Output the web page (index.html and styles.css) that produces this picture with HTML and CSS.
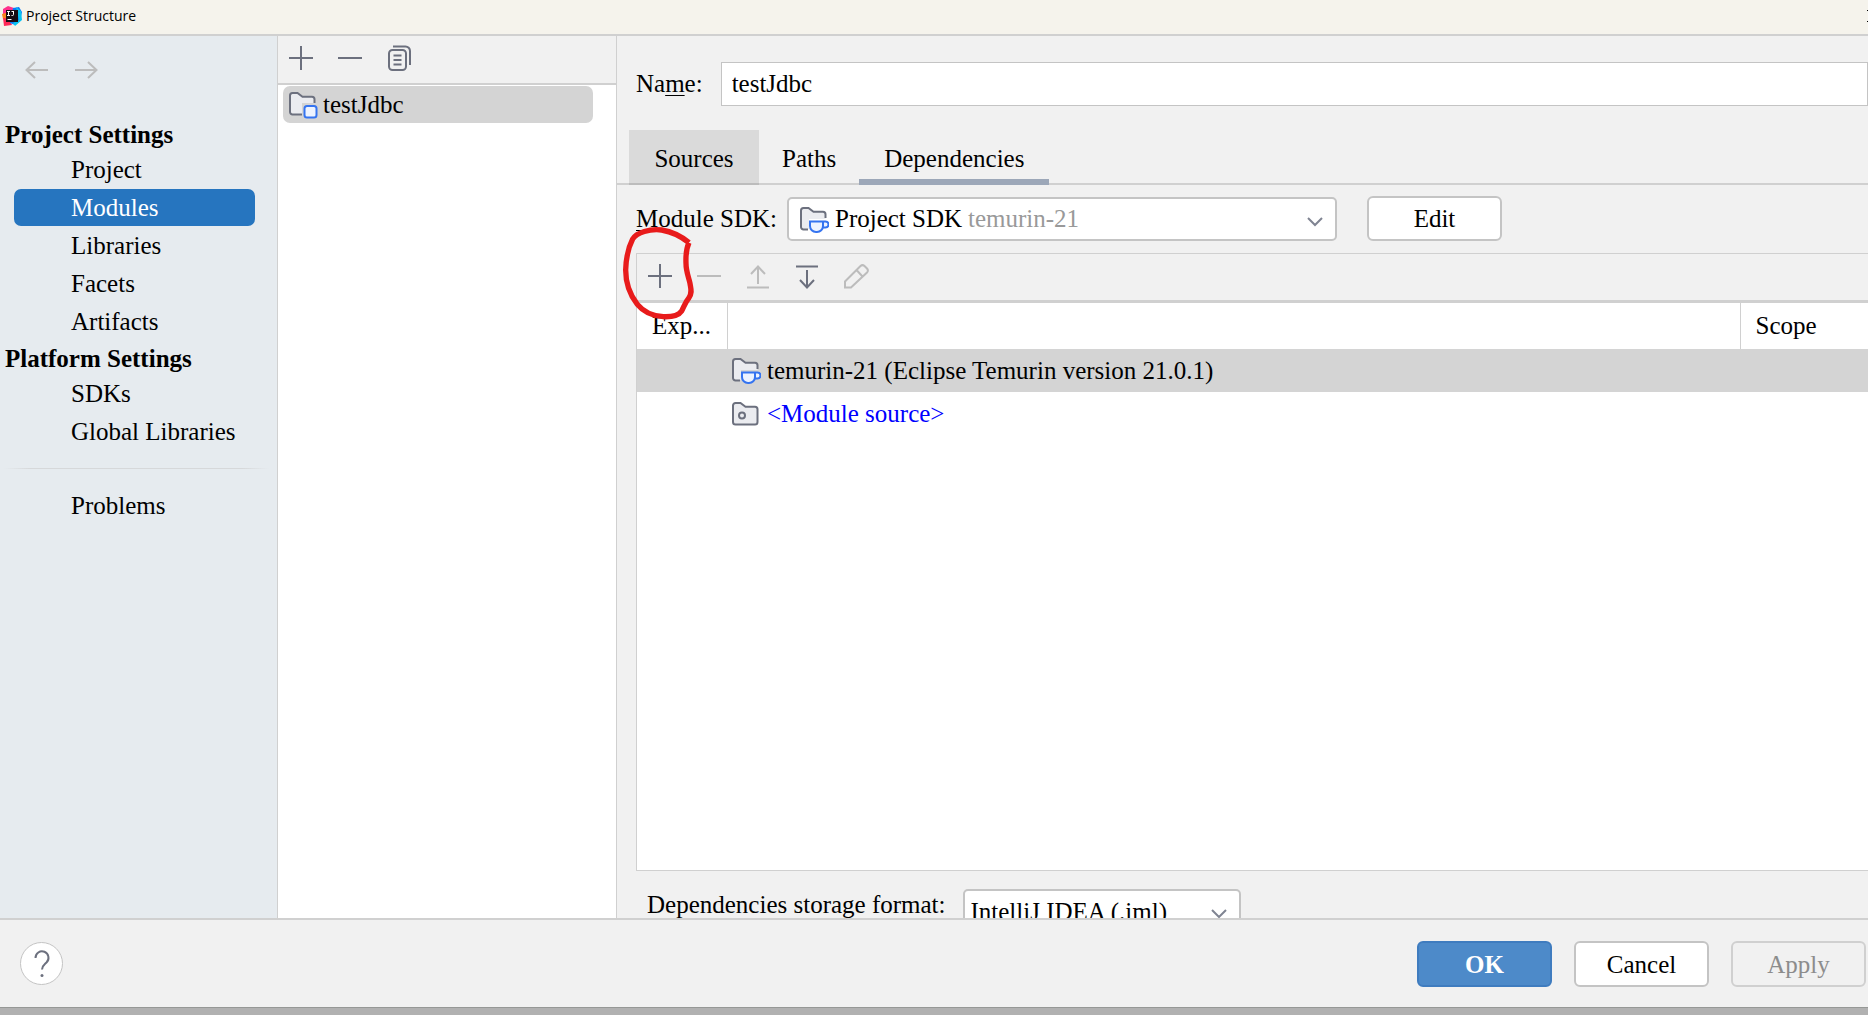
FILE: index.html
```html
<!DOCTYPE html>
<html lang="en">
<head>
<meta charset="utf-8">
<title>Project Structure</title>
<link rel="stylesheet" href="styles.css">
</head>
<body>
<svg class="defs" aria-hidden="true">
  <symbol id="add" viewBox="0 0 28 28"><path d="M14 2v24M2 14h24"/></symbol>
  <symbol id="remove" viewBox="0 0 28 28"><path d="M2 14h24"/></symbol>
  <symbol id="chevron" viewBox="0 0 16 10"><path d="M1 1l7 7 7-7"/></symbol>
  <symbol id="sdk" viewBox="0 0 30 28">
    <path class="folder-fill" d="M2 4.500a2.500 2.500 0 0 1 2.500-2.500h5l5 3.700h9.500a2.500 2.500 0 0 1 2.500 2.500V13H10v10H4.500A2.500 2.500 0 0 1 2 20.500z"/>
    <path d="M9 23.500H4.500A2.500 2.500 0 0 1 2 21V4.500A2.500 2.500 0 0 1 4.500 2h5l5 3.700H24a2.500 2.500 0 0 1 2.500 2.500V12"/>
    <path class="badge" d="M11 15.500h13v4.500a6 6 0 0 1-6 6h-1a6 6 0 0 1-6-6zM24 15.500h2.500a2.500 2.500 0 0 1 0 6H24"/>
  </symbol>
</svg>
<div class="window">
  <header class="titlebar">
    <svg class="logo" viewBox="0 0 20 20" aria-hidden="true">
      <path fill="#ff318c" d="M1 3l5-3 6 2-4 8-7 1z"/>
      <path fill="#fc801d" d="M0 8l7-2v9l-6-2z"/>
      <path fill="#fe2857" d="M1 12l6 1 3 6-8 1z"/>
      <path fill="#087cfa" d="M11 2l6-1 3 5-2 9-5 4-5-2z"/>
      <path fill="#07c3f2" d="M14 1l5 4 1 9-7 6-2-3 6-3z"/>
      <path fill="#160b14" d="M4 4h12v12H4z"/>
      <path class="logo-mark" d="M5 5.500h3M6.500 5.500v4M5 9.500h3M9.500 5.500H12M11.500 5.500v3q0 1-1 1h-1M5.500 13.500h4"/>
    </svg>
    <h1 class="title">Project Structure</h1>
    <button class="close" aria-label="Close"><svg viewBox="0 0 12 12"><path d="M0 0l12 12M12 0L0 12"/></svg></button>
  </header>

  <div class="content">
    <aside class="sidebar">
      <div class="history">
        <button class="tool off" aria-label="Back"><svg viewBox="0 0 28 28"><path d="M25 14H4M12 6l-8.500 8 8.500 8"/></svg></button>
        <button class="tool off" aria-label="Forward"><svg viewBox="0 0 28 28"><path d="M3 14h21M16 6l8.500 8-8.500 8"/></svg></button>
      </div>
      <nav class="nav">
        <h2>Project Settings</h2>
        <a href="#project">Project</a>
        <a href="#modules" class="active">Modules</a>
        <a href="#libraries">Libraries</a>
        <a href="#facets">Facets</a>
        <a href="#artifacts">Artifacts</a>
        <h2>Platform Settings</h2>
        <a href="#sdks">SDKs</a>
        <a href="#global">Global Libraries</a>
        <hr>
        <a href="#problems">Problems</a>
      </nav>
    </aside>

    <section class="modules">
      <div class="modules-tools">
        <button class="tool" aria-label="Add"><svg><use href="#add"/></svg></button>
        <button class="tool" aria-label="Remove"><svg><use href="#remove"/></svg></button>
        <button class="tool" aria-label="Copy"><svg viewBox="0 0 28 28"><rect x="4" y="6" width="17" height="20" rx="3.500"/><path d="M8 2.500h12.500a4.500 4.500 0 0 1 4.500 4.500v14M8.500 11.500h8M8.500 16h8M8.500 20.500h8"/></svg></button>
      </div>
      <a href="#testJdbc" class="module">
        <svg class="icon" viewBox="0 0 30 28">
          <path class="folder-fill" d="M2 4.500A2.500 2.500 0 0 1 4.500 2h5l5 3.700H24a2.500 2.500 0 0 1 2.500 2.500V12H14v11.500H4.500A2.500 2.500 0 0 1 2 21z"/>
          <path d="M14 23.500H4.500A2.500 2.500 0 0 1 2 21V4.500A2.500 2.500 0 0 1 4.500 2h5l5 3.700H24a2.500 2.500 0 0 1 2.500 2.500V12"/>
          <rect class="badge" x="16.500" y="15" width="12" height="11.500" rx="2.500"/>
        </svg>
        testJdbc
      </a>
    </section>

    <main class="editor">
      <div class="name-row">
        <label for="name">Na<u>m</u>e:</label>
        <input id="name" type="text" value="testJdbc">
      </div>
      <div class="tabs" role="tablist">
        <button role="tab" class="tab hovered">Sources</button>
        <button role="tab" class="tab">Paths</button>
        <button role="tab" class="tab selected" aria-selected="true">Dependencies</button>
      </div>
      <div class="sdk-row">
        <label for="sdk-select"><u>M</u>odule SDK:</label>
        <div class="combo sdk-combo">
          <select id="sdk-select"><option>Project SDK</option></select>
          <svg class="icon combo-icon"><use href="#sdk"/></svg>
          <span class="combo-hint">temurin-21</span>
          <svg class="chevron"><use href="#chevron"/></svg>
        </div>
        <button class="button">Edit</button>
      </div>
      <div class="dependencies">
        <div class="dep-tools">
          <button class="tool" aria-label="Add"><svg><use href="#add"/></svg></button>
          <button class="tool off" aria-label="Remove"><svg><use href="#remove"/></svg></button>
          <button class="tool off" aria-label="Move up"><svg viewBox="0 0 28 28"><path d="M3 25.500h22M14 22V5M7 12l7-7.500 7 7.500"/></svg></button>
          <button class="tool" aria-label="Move down"><svg viewBox="0 0 28 28"><path d="M3 4.500h22M14 8v17M7 18l7 7.500 7-7.500"/></svg></button>
          <button class="tool off" aria-label="Edit"><svg viewBox="0 0 28 28"><path d="M3 25.500V19.500L18.500 4a3 3 0 0 1 4 0l2.500 2.500a3 3 0 0 1 0 4L9 25.500zM14.500 8l6 6.500"/></svg></button>
          <svg class="scribble" viewBox="60 555 225 285" aria-hidden="true"><path d="M267 608C245 590 215 575 185 570C150 566 110 577 98 597C86 620 78 660 77 690C77 735 90 765 112 793C130 815 155 828 190 830C215 831 235 828 245 813C252 800 255 788 266 775C278 760 272 745 270 730C266 712 258 695 258 670C257 645 259 625 267 608"/></svg>
        </div>
        <table class="dep-table">
          <colgroup><col class="col-export"><col><col class="col-scope"></colgroup>
          <thead><tr><th>Exp...</th><th></th><th>Scope</th></tr></thead>
          <tbody>
            <tr class="current"><td></td><td><div class="entry"><svg class="icon"><use href="#sdk"/></svg>temurin-21 (Eclipse Temurin version 21.0.1)</div></td><td></td></tr>
            <tr><td></td><td><div class="entry source"><svg class="icon" viewBox="0 0 30 28"><path class="folder-fill" d="M4.500 3h5l5 3.700H24a2.500 2.500 0 0 1 2.500 2.500V22a2.500 2.500 0 0 1-2.500 2.500H4.500A2.500 2.500 0 0 1 2 22V5.500A2.500 2.500 0 0 1 4.500 3z"/><path d="M4.500 3h5l5 3.700H24a2.500 2.500 0 0 1 2.500 2.500V22a2.500 2.500 0 0 1-2.500 2.500H4.500A2.500 2.500 0 0 1 2 22V5.500A2.500 2.500 0 0 1 4.500 3z"/><circle cx="11" cy="15.500" r="3"/></svg>&lt;Module source&gt;</div></td><td></td></tr>
          </tbody>
        </table>
      </div>
      <div class="storage-row">
        <label for="storage">Dependencies storage format:</label>
        <div class="combo storage-combo">
          <select id="storage"><option>IntelliJ IDEA (.iml)</option></select>
          <svg class="chevron"><use href="#chevron"/></svg>
        </div>
      </div>
    </main>
  </div>

  <footer class="footer">
    <button class="help" aria-label="Help"><svg viewBox="0 0 20 32"><path d="M3.500 10a6.500 6.500 0 1 1 11 4.500c-2.500 2.500-4.500 3.500-4.500 7"/><circle cx="10" cy="27.500" r="1.500"/></svg></button>
    <button class="button primary">OK</button>
    <button class="button">Cancel</button>
    <button class="button" disabled>Apply</button>
  </footer>
</div>
</body>
</html>
```
FILE: styles.css
```css
* { box-sizing: border-box; }

body {
  margin: 0;
  background: #b1b1b1;
  color: #000;
  font: 25px/28px "Liberation Serif", "Times New Roman", serif;
}

button, input, select { font: inherit; color: inherit; }
button { padding: 0; border: 0; background: none; }
a { color: inherit; text-decoration: none; }
svg { display: block; fill: none; stroke: #6c707e; stroke-width: 2; }
.defs { position: absolute; width: 0; height: 0; }
.folder-fill { fill: #ebecf0; stroke: none; }
.badge { fill: #edf3ff; stroke: #3574f0; }
.icon { flex: none; width: 30px; height: 28px; }

.window {
  display: flex;
  flex-direction: column;
  height: calc(100vh - 7px);
  overflow: hidden;
  background: #f1f1f1;
  border-bottom: 1px solid #969896;
}

/* Title bar */
.titlebar {
  display: flex;
  align-items: center;
  gap: 4px;
  flex: none;
  height: 36px;
  padding: 0 0 3px 2px;
  overflow: hidden;
  background: #f5f3ec;
  border-bottom: 2px solid #d0d0d0;
}
.logo { width: 20px; height: 20px; stroke: none; }
.logo-mark { stroke: #fff; stroke-width: 1; }
.title {
  flex: 1;
  margin: 0;
  font: 14px/20px "Open Sans", "Noto Sans", sans-serif;
}
.close { margin-right: -11px; }
.close svg { width: 12px; height: 12px; stroke: #000; stroke-width: 1; }

.content { display: flex; flex: 1; min-height: 0; }

.tool { flex: none; width: 28px; height: 28px; }
.tool svg { width: 28px; height: 28px; }
.off svg { stroke: #bcbcbc; }

/* Settings navigation */
.sidebar {
  flex: none;
  width: 278px;
  background: #e6ebef;
  border-right: 1px solid #d0d0d0;
}
.history { display: flex; gap: 21px; padding: 20px 23px; }
.nav { display: flex; flex-direction: column; gap: 1px; padding: 16px 0; }
.nav h2 { margin: 0; padding-left: 5px; font-size: 25px; line-height: 30px; }
.nav a + h2 { margin-top: 3px; }
.nav a {
  margin: 0 22px 0 14px;
  padding-left: 57px;
  border-radius: 7px;
  line-height: 37px;
}
.nav .active { background: #2675bf; color: #fff; }
.nav hr {
  width: calc(100% - 12px);
  height: 1px;
  margin: 17px 8px 17px 4px;
  border: 0;
  background: linear-gradient(90deg, transparent, #d6d8da 10%, #d6d8da 90%, transparent);
}

/* Module list */
.modules {
  flex: none;
  width: 339px;
  background: #fff;
  border-right: 1px solid #d0d0d0;
}
.modules-tools {
  display: flex;
  align-items: center;
  gap: 21px;
  height: 49px;
  padding: 0 9px 3px;
  background: #f1f1f1;
  border-bottom: 2px solid #d0d0d0;
}
.module {
  display: flex;
  align-items: center;
  gap: 5px;
  height: 37px;
  margin: 1px 23px 0 5px;
  padding-left: 5px;
  border-radius: 7px;
  background: #d4d4d4;
}

/* Module editor */
.editor { display: flex; flex: 1; flex-direction: column; min-width: 0; }
.name-row { display: flex; align-items: center; gap: 18px; padding: 26px 0 24px 19px; }
.name-row input {
  flex: 1;
  min-width: 0;
  height: 44px;
  padding: 0 10px;
  border: 1px solid #c4c4c4;
  border-radius: 0;
  background: #fff;
}
u { text-underline-offset: 3px; text-decoration-thickness: 1px; }

.tabs {
  display: flex;
  height: 55px;
  padding-left: 12px;
  background: linear-gradient(#d0d0d0, #d0d0d0) bottom / 100% 2px no-repeat;
}
.tab { padding: 2px 23px 0; }
.tab.hovered { width: 130px; padding: 4px 0 0; background: #dadada; border-bottom: 2px solid #bcbcbc; }
.tab.selected { padding: 8px 25px 0; border-bottom: 6px solid #9ca7b8; }

.sdk-row { display: flex; align-items: center; padding: 11px 0 12px 19px; }
.sdk-row .combo { width: 550px; margin: 0 30px 0 10px; }
.combo { position: relative; }
.combo select {
  appearance: none;
  display: block;
  width: 100%;
  height: 44px;
  padding: 0 40px 0 6px;
  border: 2px solid #c4c4c4;
  border-radius: 5px;
  background: #fff;
}
.sdk-combo select { padding-left: 46px; }
.storage-combo select { padding-top: 2px; }
.combo-icon, .combo-hint, .chevron { position: absolute; pointer-events: none; }
.combo-icon { top: 9px; left: 12px; }
.combo-hint { top: 8px; left: 181px; color: #999; }
.chevron { top: 20px; right: 14px; width: 16px; height: 10px; stroke: #7f8492; }

.button {
  width: 135px;
  height: 45px;
  border: 2px solid #c4c4c4;
  border-radius: 6px;
  background: #fff;
}
.button:disabled { border-color: #d0d0d0; background: #f1f1f1; color: #8c8c8c; }
.button.primary {
  border-color: #3f7cbf;
  background: #4d8ac9;
  color: #fff;
  font-weight: bold;
}

.dependencies {
  flex: 1;
  min-height: 0;
  margin-left: 19px;
  border: 1px solid #d0d0d0;
  border-right: 0;
  background: #fff;
}
.dep-tools {
  position: relative;
  display: flex;
  align-items: center;
  gap: 21px;
  height: 49px;
  padding: 0 9px 2px;
  background: #f1f1f1;
  border-bottom: 3px solid #d0d0d0;
}
.scribble {
  position: absolute;
  top: -29px;
  left: -17px;
  width: 75px;
  height: 95px;
  stroke: #e81b1b;
  stroke-width: 16;
  stroke-linejoin: round;
  pointer-events: none;
}
.dep-table { width: 100%; border-collapse: collapse; table-layout: fixed; }
.col-export { width: 90px; }
.col-scope { width: 128px; }
.dep-table th {
  height: 46px;
  padding: 0 15px;
  border-right: 1px solid #d0d0d0;
  font-weight: normal;
  text-align: left;
}
.dep-table th:last-child { border-right: 0; }
.dep-table td { height: 43px; padding: 0 0 0 4px; }
.current { background: #d4d4d4; }
.entry { display: flex; align-items: center; gap: 6px; }
.source { color: #00f; }

.storage-row {
  display: flex;
  flex: none;
  align-items: flex-start;
  gap: 17px;
  height: 47px;
  padding: 18px 0 0 30px;
  overflow: hidden;
}
.storage-row label { padding-top: 2px; }
.storage-combo { width: 278px; }

/* Dialog buttons */
.footer {
  display: flex;
  flex: none;
  align-items: center;
  gap: 22px;
  height: 89px;
  padding: 0 2px 0 20px;
  border-top: 2px solid #d0d0d0;
}
.footer .button { height: 46px; padding-top: 2px; }
.help {
  display: grid;
  place-items: center;
  width: 43px;
  height: 43px;
  margin-right: auto;
  border: 1px solid #c4c4c4;
  border-radius: 50%;
  background: #fff;
}
.help svg { width: 20px; height: 32px; }
.help circle { fill: #6c707e; stroke: none; }
```
